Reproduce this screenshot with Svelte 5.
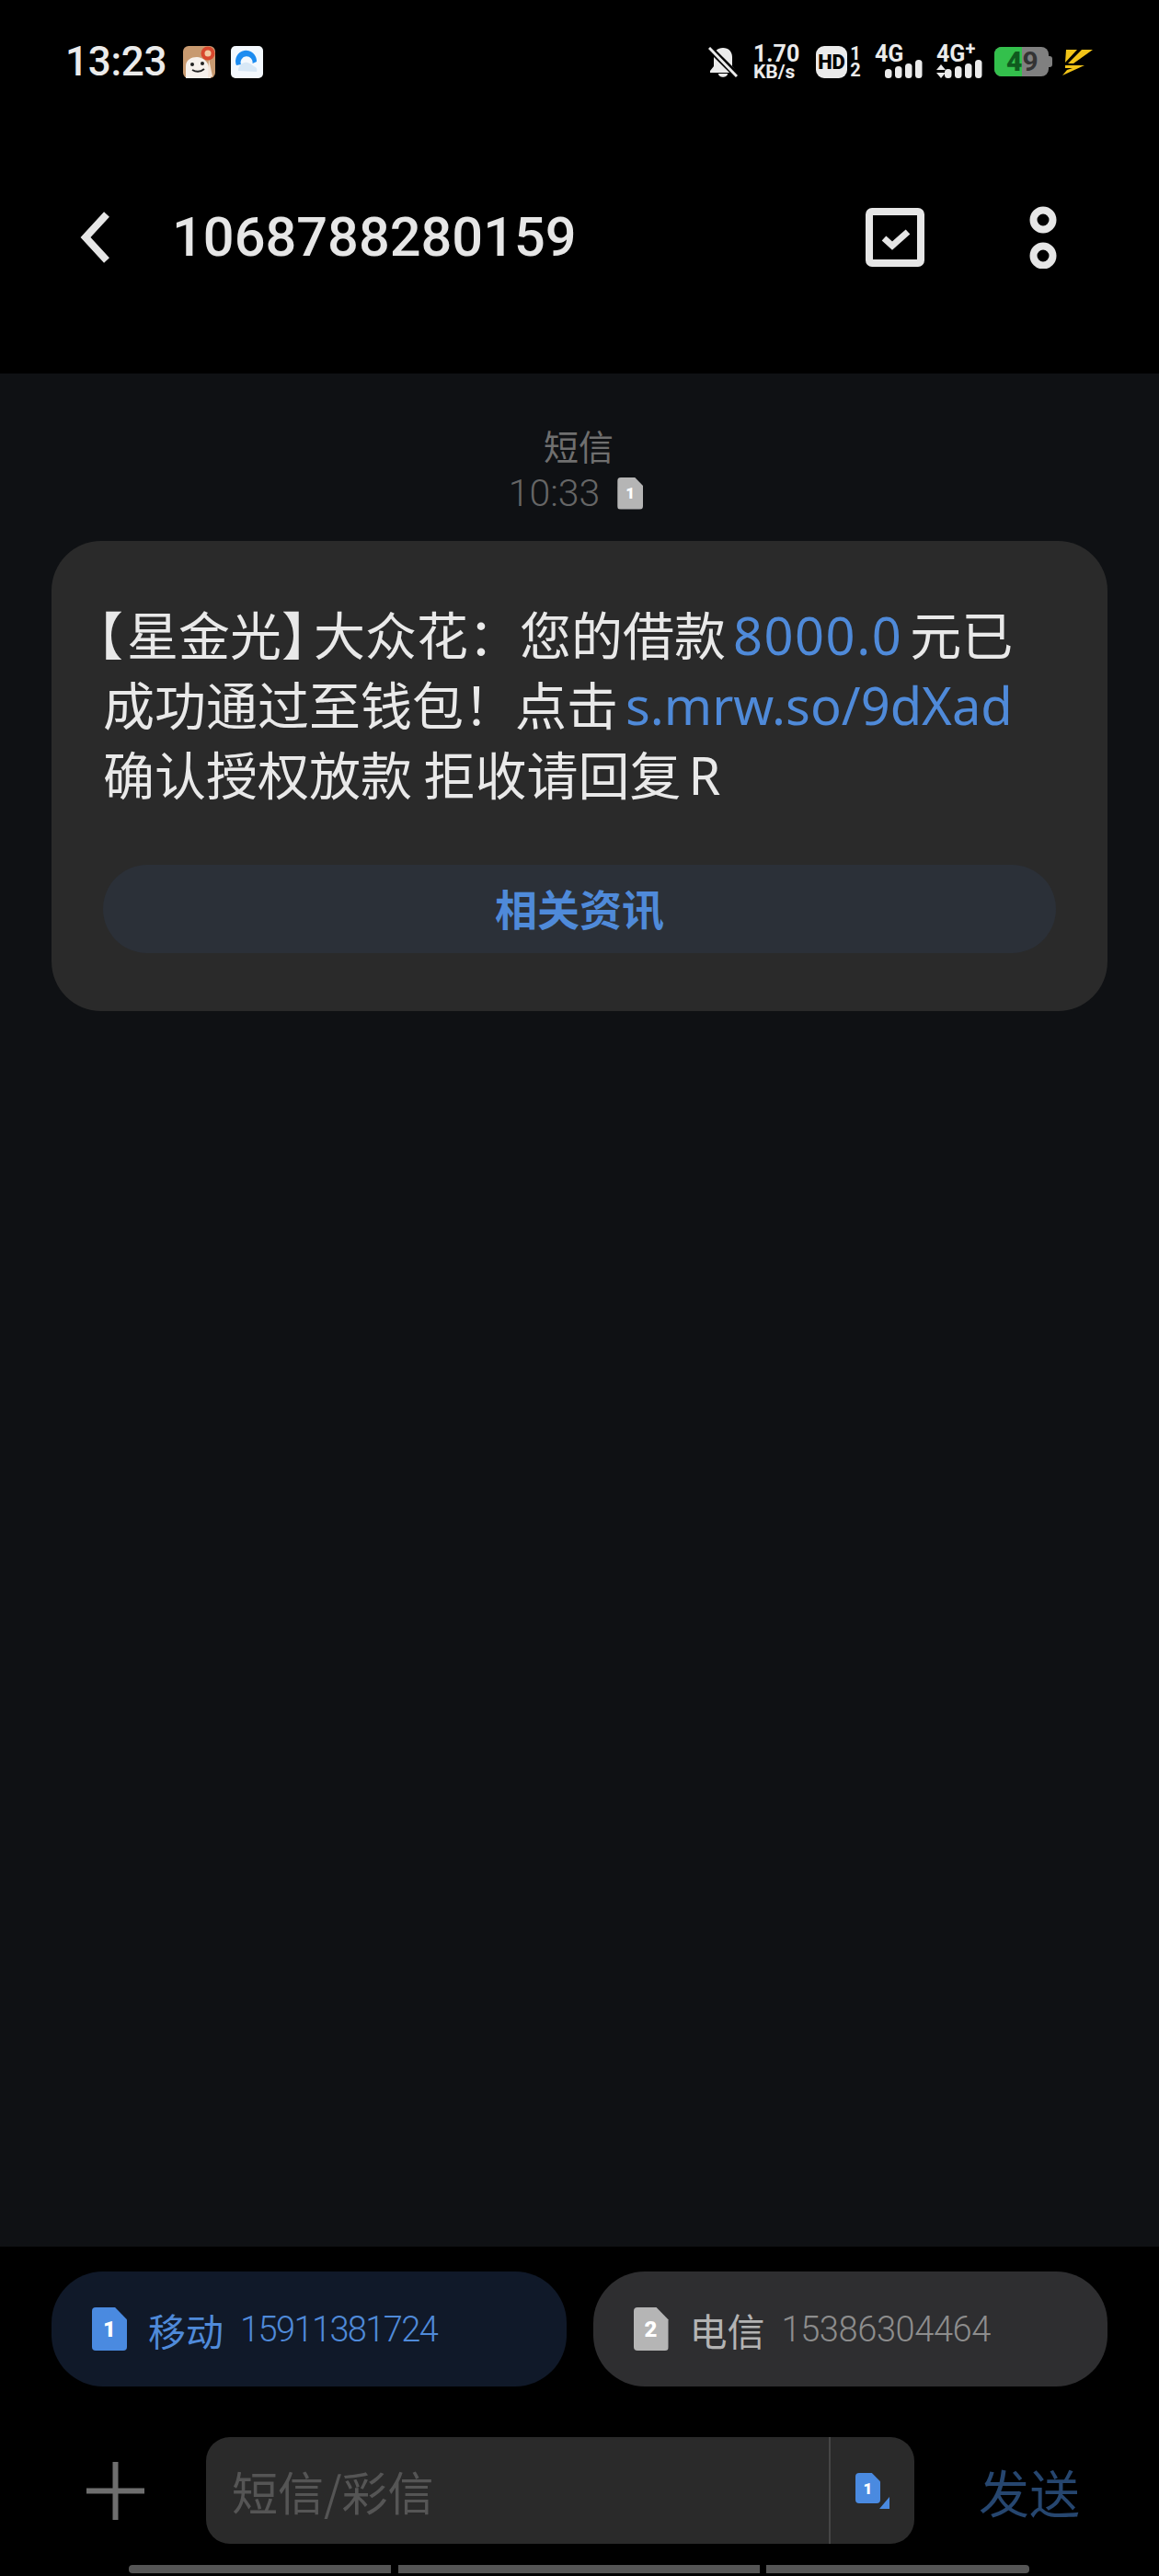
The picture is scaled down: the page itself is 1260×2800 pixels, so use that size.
<script>
	const bars4g = [10, 13, 16, 20];
	const chips = [
		{ sim: '1', name: '移动', num: '15911381724', active: true },
		{ sim: '2', name: '电信', num: '15386304464', active: false }
	];
</script>

{#snippet signal(heights)}
	<svg class="bars" width="41" height="20" viewBox="0 0 41 20">
		{#each heights as h, i}
			<rect x={i * 11} y={20 - h} width="7.5" height={h} rx="3.5" fill="#ebebeb" />
		{/each}
	</svg>
{/snippet}

<div class="page">
	<header class="top">
		<div class="status">
			<span class="time">13:23</span>
			<svg class="app first" width="35" height="35" viewBox="0 0 35 35">
				<rect width="35" height="35" rx="6" fill="#c89a70" />
				<path d="M3 35V22c0-7 6-10 12-10s13 5 13 12l2 11z" fill="#f7f1ec" />
				<path d="M28 14l4 19-5 2z" fill="#f5e6da" />
				<circle cx="27" cy="8" r="7.5" fill="#d8482e" />
				<circle cx="27" cy="8" r="3.5" fill="#f3c9a2" />
				<circle cx="10" cy="20" r="2" fill="#222" />
				<circle cx="21" cy="19" r="2" fill="#222" />
				<path d="M10 26q7 4 13-1" stroke="#222" stroke-width="2" fill="none" />
			</svg>
			<svg class="app" width="35" height="35" viewBox="0 0 35 35">
				<rect width="35" height="35" rx="5" fill="#f4f9fe" />
				<path d="M6 21A11.5 11.5 0 1 1 28 17l-4.500 2A6.500 6.500 0 1 0 11 20z" fill="#1d8cf0" />
				<path d="M8 27c0-6 5-10 10-9 4 1 5 3 7 4 3 1 4 3 3 6z" fill="#d8e8f6" />
			</svg>

			<div class="sys">
				<svg class="bell" width="32" height="33" viewBox="0 0 32 33">
					<path d="M16 1c6 0 10 4 10 10v10l4 5v2H2v-2l4-5V10C6 5 10 1 16 1zM11 29h10c0 5-10 5-10 0z" fill="#ebebeb" />
					<path d="M1 1l30 30" stroke="#000" stroke-width="7" />
					<path d="M1 1l30 31" stroke="#ebebeb" stroke-width="3" />
				</svg>
				<div class="speed"><span>1.70</span><span class="unit">KB/s</span></div>
				<span class="hd">HD</span>
				<div class="slots"><span>1</span><span>2</span></div>
				<div class="net">
					<span class="label">4G</span>
					{@render signal(bars4g)}
				</div>
				<div class="net plus">
					<span class="label">4G<sup>+</sup></span>
					<div class="net-row">
						<svg width="10" height="15" viewBox="0 0 10 15">
							<path d="M5 0l5 6H0zM0 9h10l-5 6z" fill="#ebebeb" />
						</svg>
						{@render signal(bars4g)}
					</div>
				</div>
				<div class="battery">
					<span class="fill"></span>
					<span class="level"><b>4</b>9</span>
					<span class="nub"></span>
				</div>
				<svg class="bolt" width="34" height="29" viewBox="0 0 34 29">
					<path d="M4 1h12L3 15zM21 1h12L12 16H6zM3 18h21L0 29l5-6 6-2H3z" fill="#f2c418" />
				</svg>
			</div>
		</div>

		<nav class="bar">
			<svg class="back" width="34" height="56" viewBox="0 0 34 56">
				<path d="M29 3L6 28l23 25" stroke="#e6e6e6" stroke-width="8" fill="none" />
			</svg>
			<h1>1068788280159</h1>
			<svg class="check" width="64" height="64" viewBox="0 0 64 64">
				<rect x="4" y="4" width="56" height="56" rx="3" stroke="#e6e6e6" stroke-width="8" fill="none" />
				<path d="M20 33l9 8 17-15" stroke="#e6e6e6" stroke-width="7" fill="none" />
			</svg>
			<svg class="more" width="30" height="68" viewBox="0 0 30 68">
				<circle cx="15" cy="15" r="10.500" stroke="#e6e6e6" stroke-width="8" fill="none" />
				<circle cx="15" cy="54" r="10.500" stroke="#e6e6e6" stroke-width="8" fill="none" />
			</svg>
		</nav>
	</header>

	<main class="thread">
		<div class="kind">短信</div>
		<div class="stamp">
			<span>10:33</span>
			<span class="sim small grey">1</span>
		</div>
		<article class="bubble">
			<p>
				<span class="bracket">【</span>星金光<span class="bracket close">】</span>大众花：您的借款<a class="amount">8000.0</a>元已<br />
				成功通过至钱包！点击<a>s.mrw.so/9dXad</a><br />
				确认授权放款 拒收请回复<span class="reply">R</span>
			</p>
			<button>相关资讯</button>
		</article>
	</main>

	<footer class="bottom">
		<div class="chips">
			{#each chips as c}
				<div class="chip" class:active={c.active}>
					<span class="sim" class:grey={!c.active}>{c.sim}</span>
					<span class="name">{c.name}</span>
					<span class="num">{c.num}</span>
				</div>
			{/each}
		</div>
		<div class="compose">
			<svg class="add" width="63" height="63" viewBox="0 0 63 63">
				<path d="M31.500 0v63M0 31.500h63" stroke="#6e6e6e" stroke-width="6" />
			</svg>
			<div class="input">
				<span class="hint">短信/彩信</span>
				<div class="picker">
					<span class="sim tiny">1</span>
					<svg class="corner" width="11" height="13" viewBox="0 0 11 13"><path d="M11 0v13H0z" fill="#4a8ae0" /></svg>
				</div>
			</div>
			<span class="send">发送</span>
		</div>
		<div class="gesture">
			<span class="one"></span>
			<span class="two"></span>
			<span class="three"></span>
		</div>
	</footer>
</div>

<style>
	:global(body) { background: #000; }
	.page { width: 1260px; height: 2800px; display: flex; flex-direction: column; background: #000; overflow: hidden; font-family: "Noto Sans CJK SC", Roboto, sans-serif; }

	.top { height: 406px; flex: none; color: #ebebeb; }
	.status { display: flex; align-items: center; height: 38px; padding: 48px 0 0 71px; font-family: Roboto, sans-serif; }
	.time { font-size: 44px; font-weight: 500; width: 128px; letter-spacing: -0.3px; }
	.app.first { margin-right: 17px; }
	.sys { margin-left: auto; display: flex; align-items: center; padding-right: 71px; }
	.bell { margin-right: 17px; }
	.speed { display: flex; flex-direction: column; width: 49px; margin-right: 19px; font-size: 25px; font-weight: 700; line-height: 21px; }
	.speed .unit { font-size: 21px; line-height: 18px; white-space: nowrap; }
	.hd { width: 34px; height: 35px; background: #ebebeb; border-radius: 9px; color: #000; font-size: 22px; font-weight: 900; line-height: 35px; text-align: center; }
	.slots { display: flex; flex-direction: column; width: 12px; margin: 0 15px 0 3px; font-size: 20px; font-weight: 700; line-height: 18px; text-align: center; }
	.net { position: relative; width: 52px; height: 36px; margin-right: 15px; }
	.net .label { position: absolute; left: 0; top: -3px; font-size: 25px; font-weight: 700; line-height: 26px; }
	.net .bars { position: absolute; right: 0; bottom: 0; }
	.net.plus { width: 50px; margin-right: 13px; }
	.net sup { font-size: 20px; line-height: 0; vertical-align: 7px; }
	.net-row { position: absolute; left: 0; bottom: 0; width: 100%; }
	.net-row svg:first-child { position: absolute; left: 0; bottom: 0; }
	.battery { position: relative; width: 59px; height: 32px; border-radius: 8px; background: #808080; overflow: visible; margin-right: 15px; }
	.battery .fill { position: absolute; left: 0; top: 0; bottom: 0; width: 30px; background: #33c04c; border-radius: 8px 0 0 8px; }
	.battery .level { position: absolute; left: 13px; top: 0; font-size: 30px; font-weight: 700; line-height: 32px; color: #333; }
	.battery .level b { color: #0f5a1e; }
	.battery .nub { position: absolute; right: -4px; top: 10px; width: 4px; height: 12px; background: #808080; border-radius: 0 3px 3px 0; }

	.bar { display: flex; align-items: center; height: 80px; margin-top: 132px; padding-left: 87px; color: #e6e6e6; }
	.back { margin-right: 66px; }
	h1 { margin: 0; font-family: Roboto, sans-serif; font-size: 59.5px; font-weight: 500; line-height: 80px; width: 754px; }
	.check { margin-right: 114px; }

	.thread { flex: 1; background: #0f1114; padding: 52px 56px 0; display: flex; flex-direction: column; }
	.kind { font-size: 38px; line-height: 52px; color: #6f6f6f; text-align: center; margin-right: 2px; }
	.stamp { display: flex; justify-content: center; align-items: center; gap: 19px; height: 52px; margin-right: 8px; font-family: Roboto, sans-serif; font-size: 41px; font-weight: 300; color: #666; }
	.bubble { margin-top: 26px; background: #2a2a2a; border-radius: 54px; padding: 62px 56px 63px; color: #e9e9e9; }
	p { margin: 0 0 62px 0; font-size: 56px; line-height: 76px; white-space: nowrap; }
	a { color: #4f8ad9; font-family: "Noto Sans", sans-serif; margin: 0 8px; line-height: 0; }
	.amount { letter-spacing: 1.5px; }
	.bracket { font-feature-settings: "halt"; margin: 0 4px 0 -6px; }
	.bracket.close { margin: 0 7px 0 0; }
	.reply { font-family: "Noto Sans", sans-serif; margin-left: 8px; line-height: 0; }
	button { display: block; width: 100%; height: 96px; border: none; border-radius: 48px; background: #2b3038; color: #4f8ad9; font-family: inherit; font-size: 46px; font-weight: 700; padding: 0 0 4px; }

	.sim { display: flex; align-items: center; justify-content: center; width: 38px; height: 47px; flex: none; background: #4a8ae0; color: #fff; font-family: Roboto, sans-serif; font-size: 24px; font-weight: 900; border-radius: 4px; clip-path: polygon(0 0, 66% 0, 100% 28%, 100% 100%, 0 100%); }
	.sim.grey { background: #b5b5b5; }
	.sim.small { width: 28px; height: 35px; font-size: 17px; }
	.sim.tiny { width: 27px; height: 33px; font-size: 17px; }

	.bottom { height: 358px; flex: none; padding-top: 27px; box-sizing: border-box; }
	.chips { display: flex; gap: 29px; padding: 0 56px; }
	.chip { flex: 1; height: 125px; border-radius: 56px; background: #2e2e30; display: flex; align-items: center; padding-left: 44px; color: #b3b3b3; }
	.chip.active { background: #101929; color: #4f8ad9; }
	.name { font-size: 41px; margin-left: 23px; }
	.num { font-family: Roboto, sans-serif; font-size: 38px; font-weight: 300; letter-spacing: -0.4px; margin-left: 18px; color: #8d8d8d; }
	.active .num { color: #4f8ad9; letter-spacing: -1.6px; }

	.compose { display: flex; align-items: center; margin-top: 55px; padding-left: 94px; }
	.input { display: flex; align-items: center; width: 770px; height: 116px; margin-left: 67px; background: #2a2a2a; border-radius: 26px; }
	.hint { flex: 1; padding-left: 28px; font-size: 50px; color: #555; }
	.picker { position: relative; width: 93px; height: 100%; border-left: 2px solid #454545; box-sizing: border-box; padding: 39px 0 0 27px; }
	.corner { position: absolute; left: 53px; top: 65px; }
	.send { margin-left: 70px; font-size: 55px; color: #26466f; }

	.gesture { display: flex; height: 9px; margin-top: 23px; padding-left: 140px; }
	.gesture span { display: block; height: 9px; background: #555; }
	.gesture .one { width: 285px; border-radius: 4px 0 0 4px; }
	.gesture .two { width: 393px; margin-left: 8px; }
	.gesture .three { width: 286px; margin-left: 7px; border-radius: 0 4px 4px 0; }
</style>
